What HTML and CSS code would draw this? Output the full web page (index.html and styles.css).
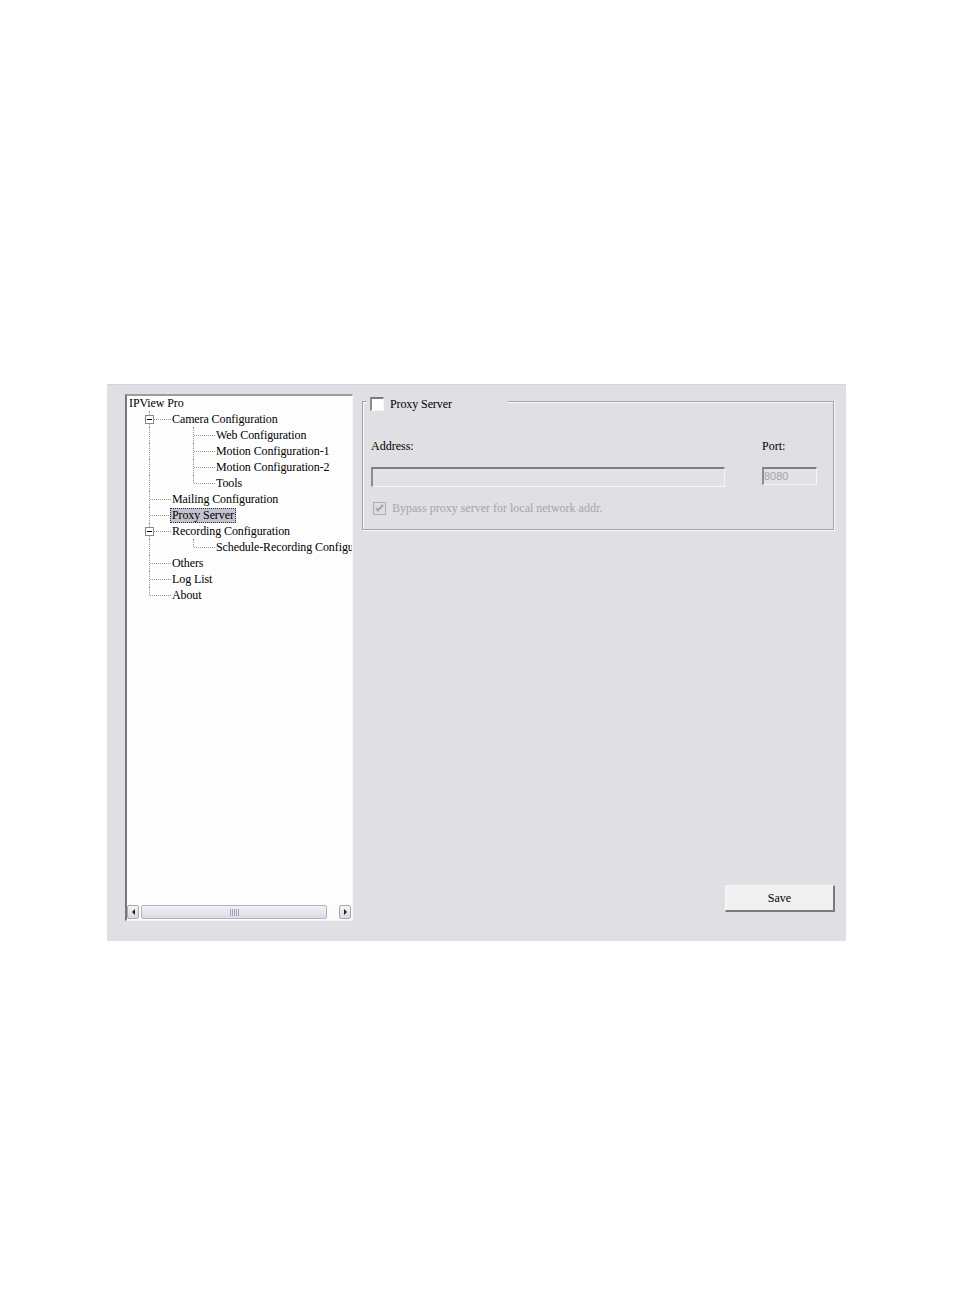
FILE: index.html
```html
<!DOCTYPE html>
<html>
<head>
<meta charset="utf-8">
<title>IPView Pro - Proxy Server</title>
<link rel="stylesheet" href="styles.css">
</head>
<body>
<div class="panel">
  <div class="treebox">
    <div class="tree">
      <div class="row root"><span class="label">IPView Pro</span></div>
      <div class="row"><span class="cell tee"><span class="exp"></span></span><span class="label">Camera Configuration</span></div>
      <div class="row"><span class="cell pipe"></span><span class="cell tee"></span><span class="label">Web Configuration</span></div>
      <div class="row"><span class="cell pipe"></span><span class="cell tee"></span><span class="label">Motion Configuration-1</span></div>
      <div class="row"><span class="cell pipe"></span><span class="cell tee"></span><span class="label">Motion Configuration-2</span></div>
      <div class="row"><span class="cell pipe"></span><span class="cell end"></span><span class="label">Tools</span></div>
      <div class="row"><span class="cell tee"></span><span class="label">Mailing Configuration</span></div>
      <div class="row"><span class="cell tee"></span><span class="label selected">Proxy Server</span></div>
      <div class="row"><span class="cell tee"><span class="exp"></span></span><span class="label">Recording Configuration</span></div>
      <div class="row"><span class="cell pipe"></span><span class="cell end"></span><span class="label">Schedule-Recording Configuration</span></div>
      <div class="row"><span class="cell tee"></span><span class="label">Others</span></div>
      <div class="row"><span class="cell tee"></span><span class="label">Log List</span></div>
      <div class="row"><span class="cell end"></span><span class="label">About</span></div>
    </div>
    <div class="hscroll">
      <span class="sbtn left"><span class="arrow-l"></span></span>
      <span class="track"><span class="thumb"><span class="grip"></span></span></span>
      <span class="sbtn right"><span class="arrow-r"></span></span>
    </div>
  </div>
  <div class="content">
    <div class="group">
      <div class="legend"><span class="chk"></span><span class="legend-text">Proxy Server</span></div>
      <div class="fields">
        <div class="flabel">Address:</div>
        <div class="flabel">Port:</div>
        <div class="input addr"></div>
        <div class="input port">8080</div>
      </div>
      <div class="bypass"><span class="chk2"><svg width="9" height="9" viewBox="0 0 9 9"><path d="M1 4 L3 6.5 L8 1" fill="none" stroke="#a3a3a3" stroke-width="2"/></svg></span><span class="bypass-text">Bypass proxy server for local network addr.</span></div>
    </div>
    <div class="save">Save</div>
  </div>
</div>
</body>
</html>
```

FILE: styles.css
```css
* { box-sizing: border-box; }
html, body { margin: 0; padding: 0; background: #ffffff; }
body {
  font-family: "Liberation Serif", "Times New Roman", serif;
  font-size: 12px;
  color: #000;
  height: 1314px;
}
.panel {
  margin: 384px 0 0 107px;
  width: 739px;
  height: 557px;
  background: #e0dfe3;
  border-top: 1px solid #cfd6e2;
  display: flex;
  gap: 9px;
  padding: 9px 11px 20px 18px;
}
.treebox {
  width: 228px;
  display: flex;
  flex-direction: column;
  background: #fdfdfd;
  border-style: solid;
  border-width: 2px 1px 1px 2px;
  border-color: #9c9c9c #f6f6f0 #f6f6f0 #767676;
}
.tree {
  flex: 1;
  overflow: hidden;
  padding-top: 0;
  margin-top: -1px;
  letter-spacing: -0.1px;
}
.row {
  height: 16px;
  display: flex;
  align-items: center;
  white-space: nowrap;
  line-height: 15px;
}
.row.root { padding-left: 2px; }
.row.root .label { margin-left: 0; padding: 0; }
.label {
  margin-left: -1px;
  padding: 0 2px;
  height: 15px;
  line-height: 15px;
}
.label.selected {
  background: #c3c3cf;
  outline: 1px dotted #333;
  outline-offset: -1px;
}
.cell {
  width: 44px;
  height: 16px;
  flex: none;
  position: relative;
}
.cell::before {
  content: "";
  position: absolute;
  left: 22px;
  top: 0;
  height: 16px;
  border-left: 1px dotted #9a9a9a;
}
.cell.end::before { height: 8px; }
.cell.tee::after, .cell.end::after {
  content: "";
  position: absolute;
  left: 23px;
  top: 8px;
  width: 21px;
  border-top: 1px dotted #9a9a9a;
}
.exp {
  position: absolute;
  left: 18px;
  top: 4px;
  width: 9px;
  height: 9px;
  background: #fff;
  border: 1px solid #8a8a8a;
  z-index: 1;
}
.exp::after {
  content: "";
  position: absolute;
  left: 1px;
  top: 3px;
  width: 5px;
  height: 1px;
  background: #000;
}
.hscroll {
  height: 14px;
  margin-bottom: 1px;
  display: flex;
  align-items: stretch;
  background: #fbfbf7;
}
.sbtn {
  width: 12px;
  flex: none;
  border: 1px solid #a9a9b4;
  border-radius: 2px;
  background: linear-gradient(#f4f4f6, #d9d9e0);
  display: flex;
  align-items: center;
  justify-content: center;
}
.sbtn.right { margin-left: auto; margin-right: 1px; }
.arrow-l {
  width: 0; height: 0;
  border-top: 3px solid transparent;
  border-bottom: 3px solid transparent;
  border-right: 3px solid #222;
}
.arrow-r {
  width: 0; height: 0;
  border-top: 3px solid transparent;
  border-bottom: 3px solid transparent;
  border-left: 3px solid #222;
}
.track { display: flex; margin-left: 2px; }
.thumb {
  width: 186px;
  border: 1px solid #b2b2c0;
  border-radius: 2px;
  background: linear-gradient(#f0f0f5, #dcdce6);
  display: flex;
  align-items: center;
  justify-content: center;
}
.grip {
  width: 9px;
  height: 7px;
  background: repeating-linear-gradient(90deg, #a6a6b6 0 1px, transparent 1px 2px);
}
.content {
  flex: 1;
  display: flex;
  flex-direction: column;
}
.group {
  margin-top: 7px;
  margin-right: 1px;
  height: 129px;
  border: 1px solid #a3a3a6;
  box-shadow: 1px 1px 0 #fafafa, inset 1px 1px 0 #fafafa;
  position: relative;
  padding: 37px 8px 0 8px;
}
.legend {
  position: absolute;
  top: -6px;
  left: 4px;
  width: 141px;
  height: 15px;
  padding-left: 3px;
  background: #e0dfe3;
  display: flex;
  align-items: center;
}
.chk {
  width: 14px;
  height: 14px;
  flex: none;
  background: #fff;
  border-style: solid;
  border-width: 2px 1px 1px 2px;
  border-color: #7c7c7c #f4f4f0 #f4f4f0 #8c8c8c;
}
.legend-text { margin-left: 6px; line-height: 14px; letter-spacing: -0.1px; }
.fields {
  display: grid;
  grid-template-columns: 354px 55px;
  column-gap: 37px;
  row-gap: 14px;
  align-items: start;
}
.flabel { height: 14px; line-height: 14px; }
.input {
  border-style: solid;
  border-width: 2px 1px 1px 2px;
  border-color: #7e7e7e #f6f6ee #f6f6ee #8e8e8e;
  background: #e2e1e5;
}
.input.addr { height: 20px; }
.input.port {
  height: 18px;
  font-family: "Liberation Sans", Arial, sans-serif;
  font-size: 11px;
  line-height: 14px;
  color: #a4a4a4;
  padding-left: 0;
}
.bypass {
  margin-top: 15px;
  padding-left: 2px;
  display: flex;
  align-items: center;
  height: 13px;
}
.chk2 {
  width: 13px;
  height: 13px;
  flex: none;
  border: 1px solid #b0b0b0;
  background: #dddce0;
  display: flex;
  align-items: center;
  justify-content: center;
}
.bypass-text { margin-left: 6px; color: #a6a6a6; line-height: 13px; }
.save {
  margin-top: auto;
  margin-bottom: 9px;
  align-self: flex-end;
  width: 110px;
  height: 27px;
  background: #f1f1f1;
  border-style: solid;
  border-width: 1px 2px 2px 1px;
  border-color: #f8f8f8 #7a7a7a #7a7a7a #f8f8f8;
  display: flex;
  align-items: center;
  justify-content: center;
  line-height: 14px;
}
```
